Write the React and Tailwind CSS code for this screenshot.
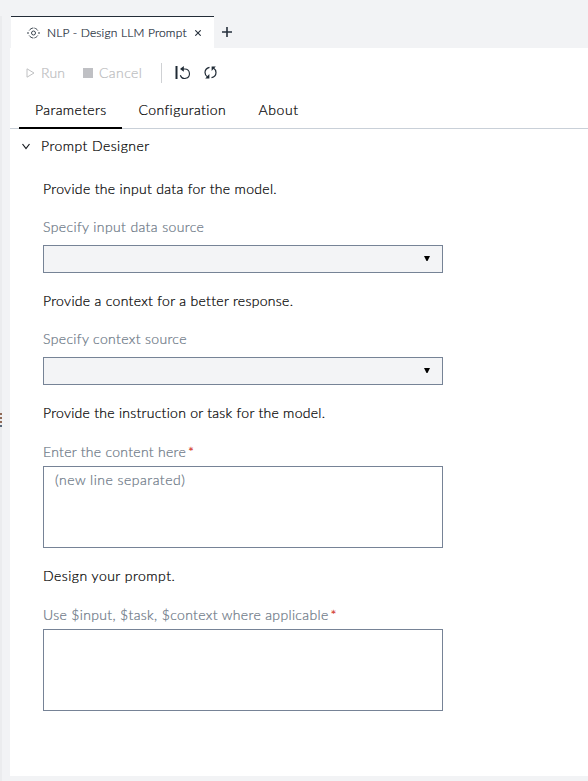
function TaskIcon() {
  return (
    <svg width="13" height="12" viewBox="0 0 13 12" fill="none" stroke="#3c4650" strokeWidth="1">
      <circle cx="6.5" cy="6" r="2" />
      <path d="M2.2 3.5C3.2 2 4.8 1 6.5 1s3.300 1 4.300 2.500M2.200 8.500C3.200 10 4.800 11 6.500 11s3.300-1 4.300-2.500" strokeDasharray="5 1" />
      <path d="M0.300 6h1.400M11.300 6h1.400" strokeWidth="1.400" />
    </svg>
  );
}

function ResetIcon() {
  return (
    <svg width="16" height="16" viewBox="0 0 16 16" fill="none" stroke="#1f2a35" strokeWidth="1.100">
      <path d="M1.500 1v13" strokeWidth="2" />
      <path d="M7 4h2.800a4.700 4.700 0 1 1-4.500 6.200" />
      <path d="M8.800 1 5 4l3.800 2.800z" fill="#1f2a35" stroke="none" />
    </svg>
  );
}

function RefreshIcon() {
  return (
    <svg width="14" height="14" viewBox="0 0 14 14" fill="none" stroke="#1f2a35" strokeWidth="1.200">
      <path d="M5.500 1.300C2.800 2 1 4.100 1 6.500c0 1.900 1 3.600 2.600 4.600" />
      <path d="M7.500 11.700c2.700-.7 4.500-2.800 4.500-5.200 0-1.900-1-3.600-2.600-4.600" />
      <path d="M5.400 8v4.500H1.200z" fill="#1f2a35" stroke="none" />
      <path d="M7.600 5V.5h4.200z" fill="#1f2a35" stroke="none" />
    </svg>
  );
}

function Heading({ className, children }) {
  return <p className={"h-5 leading-5 whitespace-nowrap text-black " + className}>{children}</p>;
}

function Label({ className, required, children }) {
  return (
    <div className="flex h-5 items-center gap-0.5 leading-5 whitespace-nowrap text-[#6c7886]">
      <span className={className}>{children}</span>
      {required && <span className="text-[#d2362b]">*</span>}
    </div>
  );
}

function Select() {
  return (
    <div className="flex h-7 w-[400px] items-center justify-end border border-[#768396] bg-[#f3f4f6] pr-3">
      <svg width="6" height="5" viewBox="0 0 6 5" className="-mt-0.5"><path d="M0 0h6L3.500 5h-1z" fill="#000" /></svg>
    </div>
  );
}

export default function App() {
  return (
    <div className="flex h-[781px] w-[588px] flex-col overflow-hidden bg-[#f2f3f5] font-['Lato',sans-serif] text-[14px] font-light [-webkit-text-stroke:0.22px_currentColor]">
      <div className="h-4 shrink-0" />
      <div className="flex h-[765px]">
        <aside className="flex w-0.5 shrink-0 flex-col gap-0.5 bg-[#ebecee] pt-[397px]">
          <i className="h-0.5 bg-[#8f6a57]" />
          <i className="h-0.5 bg-[#8f6a57]" />
          <i className="h-0.5 bg-[#8f6a57]" />
          <i className="h-0.5 bg-[#59697b]" />
        </aside>
        <main className="ml-2 flex w-[578px] flex-col">
          <div className="flex h-8 shrink-0">
            <div className="ml-px flex w-[203px] items-center border-t border-[#232c37] bg-white pl-4">
              <TaskIcon />
              <span className="ml-[7px] w-[141px] text-[12px] leading-5 tracking-[0.17px] whitespace-nowrap text-[#26303c]">NLP - Design LLM Prompt</span>
              <svg width="6" height="6" viewBox="0 0 6 6" className="ml-[7px]" stroke="#26303c" strokeWidth="1.100"><path d="m.3.3 5.400 5.400m0-5.400L.3 5.700" /></svg>
            </div>
            <svg width="10" height="10" viewBox="0 0 10 10" className="mt-[11px] ml-2" stroke="#26303c" strokeWidth="1.600"><path d="M0 5h10M5 0v10" /></svg>
          </div>
          <section className="flex h-[728px] shrink-0 flex-col bg-white">
            <div className="flex h-[49px] items-center pl-4 text-[#bcbdc0]">
              <svg width="9" height="10" viewBox="0 0 9 10" fill="none" stroke="#bfc0c2"><path d="M1 .8v8.400L8 5z" /></svg>
              <span className="ml-[6px] w-[42px] tracking-[0.2px]">Run</span>
              <i className="size-[10px] bg-[#bfc0c4]" />
              <span className="ml-[6px] w-[62px] tracking-[0.4px]">Cancel</span>
              <i className="h-5 w-px bg-[#cfd1d4]" />
              <span className="ml-[13px]"><ResetIcon /></span>
              <span className="ml-[13px]"><RefreshIcon /></span>
            </div>
            <nav className="flex h-8 shrink-0 border-b border-[#c9d0d8] pl-[9px] leading-[25px] tracking-[0.4px] whitespace-nowrap text-black">
              <div className="h-8 w-[103px] border-b-2 border-black pl-4"><span>Parameters</span></div>
              <div className="w-[120px] pl-[16.5px]"><span>Configuration</span></div>
              <div className="pl-[16.5px] tracking-[0.6px]"><span>About</span></div>
            </nav>
            <div className="mt-[7px] flex h-5 items-center pl-3 leading-5 text-black">
              <svg width="8" height="7" viewBox="0 0 8 7" fill="none" stroke="#15191e" strokeWidth="1.200"><path d="m.5 1 3.500 4.500L7.500 1" /></svg>
              <span className="ml-[11px] tracking-[0.45px]">Prompt Designer</span>
            </div>
            <form className="flex flex-col pt-[23px] pl-[33px]">
              <Heading className="tracking-[0.32px]">Provide the input data for the model.</Heading>
              <div className="h-[18px]" />
              <Label className="tracking-[0.38px]">Specify input data source</Label>
              <div className="h-2" />
              <Select />
              <div className="h-[18px]" />
              <Heading className="tracking-[0.31px]">Provide a context for a better response.</Heading>
              <div className="h-[18px]" />
              <Label className="tracking-[0.35px]">Specify context source</Label>
              <div className="h-2" />
              <Select />
              <div className="h-[18px]" />
              <Heading className="tracking-[0.27px]">Provide the instruction or task for the model.</Heading>
              <div className="h-[19px]" />
              <Label required className="tracking-[0.29px]">Enter the content here</Label>
              <div className="h-1" />
              <div className="h-[82px] w-[400px] border border-[#768396] pt-[3px] pl-[11px] leading-5 tracking-[0.5px] text-[#6c7886]"><span>(new line separated)</span></div>
              <div className="h-[18px]" />
              <Heading className="tracking-[0.48px]">Design your prompt.</Heading>
              <div className="h-[19px]" />
              <Label required className="tracking-[0.35px]">Use $input, $task, $context where applicable</Label>
              <div className="h-1" />
              <div className="h-[82px] w-[400px] border border-[#768396]" />
            </form>
          </section>
        </main>
      </div>
    </div>
  );
}
